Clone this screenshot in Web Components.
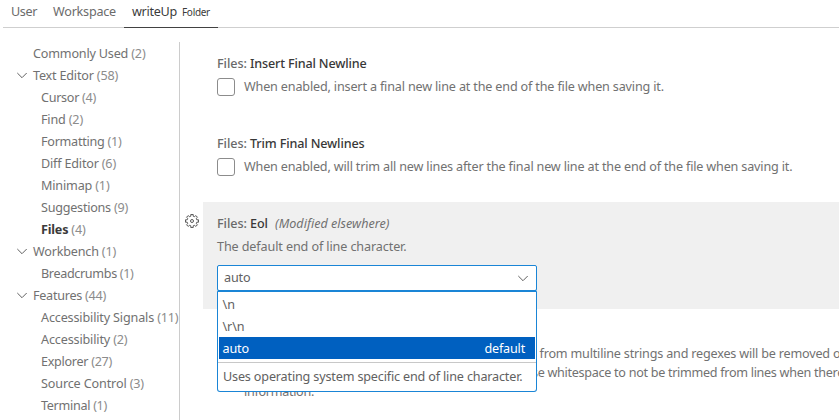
<!DOCTYPE html>
<html lang="en">
<head>
<meta charset="utf-8">
<title>Settings</title>
<style>
body { margin: 0; background: #fff; overflow: hidden; }
</style>
</head>
<body>
<settings-editor></settings-editor>
<script>
const define = (name, html, setup) => customElements.define(name, class extends HTMLElement {
  connectedCallback() {
    if (this.shadowRoot) return;
    const root = this.attachShadow({ mode: 'open' });
    const t = document.createElement('template');
    t.innerHTML = typeof html === 'function' ? html(this) : html;
    root.append(t.content.cloneNode(true));
    if (setup) setup(this, root);
  }
});
const CHEVRON = '<svg width="16" height="16" viewBox="0 0 16 16" fill="none" stroke="currentColor" stroke-width="1"><path d="M3.3 6 8 10.7l4.7-4.7"/></svg>';

// One line of text whose letter spacing is set so that it takes up the width in "w".
define('ui-text', `<style>
  :host { display: inline-block; white-space: pre; }
  span { display: inline-block; }
</style><span><slot></slot></span>`, (el, root) => {
  const w = parseFloat(el.getAttribute('w'));
  const n = el.textContent.length;
  if (!w || !n) return;
  const span = root.querySelector('span');
  span.style.letterSpacing = '0.001px';
  const natural = span.getBoundingClientRect().width;
  span.style.letterSpacing = ((w - natural) / n).toFixed(4) + 'px';
});

define('scope-tab', `<style>
  :host { display: flex; align-items: center; box-sizing: border-box; height: 28px; padding: 0 8px 4px; border-bottom: 1px solid transparent; color: #6b6b6b; }
  :host([active]) { color: #3b3b3b; border-bottom: 1.4px solid #424242; }
  ::slotted(.small) { font-size: 10px; margin-left: 5px; }
</style><slot></slot>`);

define('scope-tabs', `<style>
  :host { display: flex; margin-left: 3px; height: 28px; box-sizing: border-box; box-shadow: inset 0 -1px #cfcfcf; }
</style><slot></slot>`);

define('toc-row', el => `<style>
  :host { display: flex; align-items: center; box-sizing: border-box; height: 22px; padding: 2px 0 0 41px; color: #717171; white-space: nowrap; }
  :host([top]) { padding-left: 14px; }
  .tw { display: none; width: 16px; height: 16px; margin: -2px 3px 0 0; color: #616161; }
  .tw svg { display: block; }
  :host([top]) .tw { display: block; }
  .count { color: #8c8c8c; }
  b { color: #3b3b3b; font-weight: 700; }
</style><span class="tw">${el.hasAttribute('open') ? CHEVRON : ''}</span><ui-text w="${el.getAttribute('w')}">${
  el.hasAttribute('selected') ? `<b>${el.getAttribute('label')}</b>` : el.getAttribute('label')} <span class="count">(${el.getAttribute('count')})</span></ui-text>`);

const ROWS = [
  ['Commonly Used', 2, 112.5, 'top'], ['Text Editor', 58, 85, 'top open'], ['Cursor', 4, 55], ['Find', 2, 42],
  ['Formatting', 1, 80.5], ['Diff Editor', 6, 75], ['Minimap', 1, 68.5], ['Suggestions', 9, 87],
  ['Files', 4, 44.5, 'selected'], ['Workbench', 1, 83, 'top open'], ['Breadcrumbs', 1, 92.5],
  ['Features', 44, 73, 'top open'], ['Accessibility Signals', 11, 137.5], ['Accessibility', 2, 86.5],
  ['Explorer', 27, 71], ['Source Control', 3, 103], ['Terminal', 1, 66]];
define('settings-toc', `<style>
  :host { display: block; box-sizing: border-box; width: 180px; height: 378px; border-right: 1px solid #cccccc; overflow: hidden; }
</style>` + ROWS.map(([l, c, w, f = '']) => `<toc-row label="${l}" count="${c}" w="${w}" ${f}></toc-row>`).join(''));

define('setting-title', `<style>
  :host { display: flex; height: 20px; line-height: 20px; font-weight: 500; color: #6a6a6a; }
  ::slotted(.name) { color: #383838; }
  ::slotted(.note) { font-weight: 400; font-style: italic; color: #717171; margin-left: 7px; }
</style><slot></slot>`);

define('setting-check', `<style>
  :host { display: block; height: 80px; padding-left: 37px; }
  .row { display: flex; align-items: center; gap: 9px; margin-top: 4px; height: 18px; color: #717171; }
  i { box-sizing: border-box; width: 18px; height: 18px; border: 1px solid #8c8c8c; border-radius: 3px; background: #fff; }
</style><slot name="title"></slot><div class="row"><i></i><slot></slot></div>`);

define('gear-icon', `<style>
  :host { display: block; width: 16px; height: 16px; color: #5a5a5a; }
</style><svg width="16" height="16" viewBox="0 0 16 16" fill="none" stroke="currentColor" stroke-width="1" stroke-linejoin="round"><path/><circle cx="8" cy="8" r="1.5"/></svg>`,
(el, root) => {
  let d = '';
  for (let k = 0; k < 8; k++) {
    for (const [r, a] of [[5, -13], [6.6, -11], [6.6, 11], [5, 13]]) {
      const t = (k * 45 + a) * Math.PI / 180;
      d += (d ? 'L' : 'M') + (8 + r * Math.sin(t)).toFixed(2) + ' ' + (8 - r * Math.cos(t)).toFixed(2);
    }
  }
  root.querySelector('path').setAttribute('d', d + 'Z');
});

define('select-option', `<style>
  :host { display: flex; align-items: center; justify-content: space-between; box-sizing: border-box; height: 22px; margin: 0 1px; padding: 2px 10px 0 3.5px; color: #616161; }
  :host([selected]) { background: #0060c0; color: #fff; }
</style><slot></slot>`);

define('select-box', `<style>
  :host { display: block; position: relative; width: 320px; color: #616161; }
  .box { box-sizing: border-box; height: 26px; border: 1px solid #1a85d6; border-radius: 2px; background: #fff; display: flex; align-items: center; justify-content: space-between; padding: 0 5px 0 6px; }
  .menu { position: absolute; z-index: 2; top: 25px; left: 0; box-sizing: border-box; width: 320px; height: 102px; border: 1px solid #1a85d6; border-top-width: 2px; border-radius: 2px 2px 3px 3px; background: #fff; padding-top: 1px; }
  .detail { margin-top: 3px; border-top: 1px solid #c8c8c8; height: 28px; display: flex; align-items: center; padding: 1px 0 0 5px; box-sizing: border-box; }
  svg { display: block; }
</style>
<div class="box"><ui-text w="26.5">auto</ui-text>${CHEVRON}</div>
<div class="menu">
  <select-option><ui-text w="12.5">\\n</ui-text></select-option>
  <select-option><ui-text w="22">\\r\\n</ui-text></select-option>
  <select-option selected><ui-text w="26.5">auto</ui-text><ui-text w="40.5">default</ui-text></select-option>
  <div class="detail"><ui-text w="299.5">Uses operating system specific end of line character.</ui-text></div>
</div>`);

define('setting-eol', `<style>
  :host { display: flex; height: 107px; }
  .gutter { width: 23px; padding: 11px 0 0 4px; box-sizing: border-box; }
  .body { flex: 1; background: #f0f0f0; padding: 12px 0 0 14px; box-sizing: border-box; color: #717171; }
  .desc { height: 18px; line-height: 18px; margin: 4px 0 9px; }
</style>
<div class="gutter"><gear-icon></gear-icon></div>
<div class="body">
  <setting-title><ui-text w="33">Files: </ui-text><ui-text class="name" w="18">Eol</ui-text><ui-text class="note" w="114.5">(Modified elsewhere)</ui-text></setting-title>
  <div class="desc"><ui-text w="189.5">The default end of line character.</ui-text></div>
  <select-box></select-box>
</div>`);

define('setting-tail', `<style>
  :host { display: block; padding: 35px 0 0 64px; line-height: 19px; color: #717171; }
  div { height: 19px; white-space: nowrap; }
  .a { margin-left: 295.5px; }
  .b { margin-left: 288px; }
</style>
<div class="a"><ui-text w="308.5">from multiline strings and regexes will be removed on</ui-text></div>
<div class="b"><ui-text w="312">se whitespace to not be trimmed from lines when there</ui-text></div>
<div><ui-text w="70">information.</ui-text></div>`);

define('settings-editor', `<style>
  :host { display: block; width: 839px; height: 420px; overflow: hidden; background: #fff; font: 12.6px/18px "Noto Sans", "Open Sans", sans-serif; }
  .cols { display: flex; padding-top: 14px; height: 378px; }
  .list { flex: 1; padding-top: 12px; min-width: 0; overflow: hidden; }
  setting-eol { margin-top: -12px; }
</style>
<scope-tabs>
  <scope-tab><ui-text w="26">User</ui-text></scope-tab>
  <scope-tab><ui-text w="63">Workspace</ui-text></scope-tab>
  <scope-tab active><ui-text w="45">writeUp</ui-text><ui-text class="small" w="28">Folder</ui-text></scope-tab>
</scope-tabs>
<div class="cols">
  <settings-toc></settings-toc>
  <div class="list">
    <setting-check><setting-title slot="title"><ui-text w="33">Files: </ui-text><ui-text class="name" w="116.5">Insert Final Newline</ui-text></setting-title><ui-text w="420">When enabled, insert a final new line at the end of the file when saving it.</ui-text></setting-check>
    <setting-check><setting-title slot="title"><ui-text w="33">Files: </ui-text><ui-text class="name" w="114.5">Trim Final Newlines</ui-text></setting-title><ui-text w="548.5">When enabled, will trim all new lines after the final new line at the end of the file when saving it.</ui-text></setting-check>
    <setting-eol></setting-eol>
    <setting-tail></setting-tail>
  </div>
</div>`);
</script>
</body>
</html>
